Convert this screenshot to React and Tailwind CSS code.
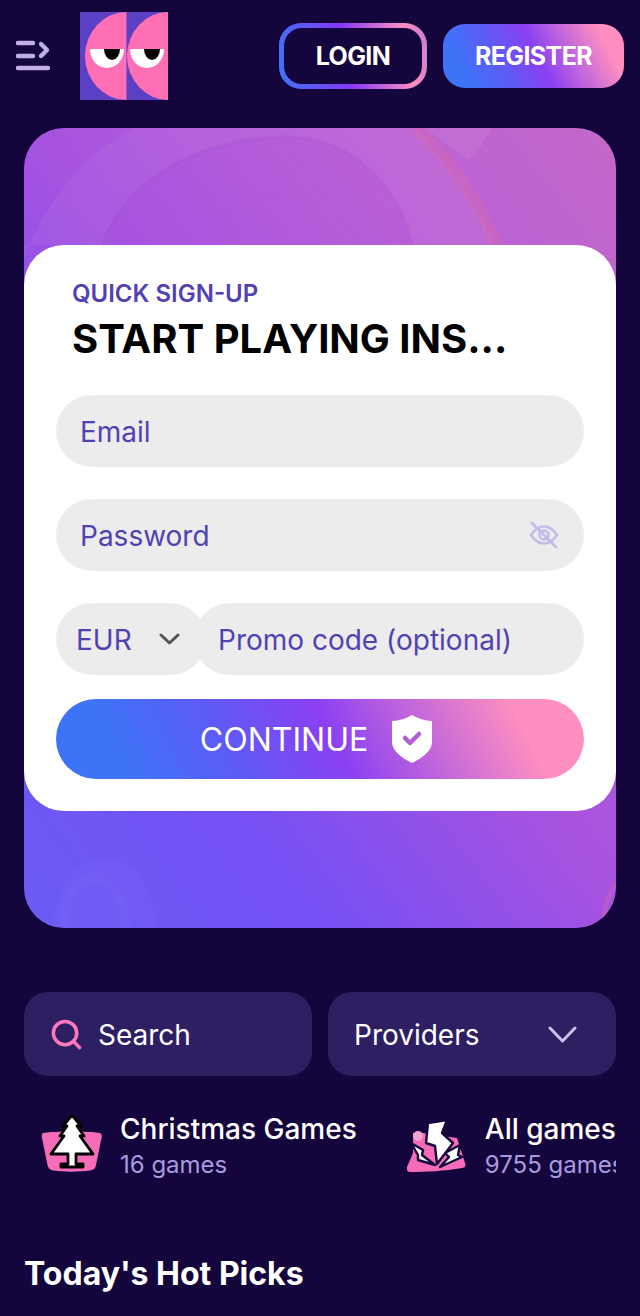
import React from 'react';
import { Search } from 'lucide-react';

const gradient = 'bg-[linear-gradient(63deg,#3d74f7_13%,#5c5cf7_32%,#8a40f2_52%,#c76ad8_70%,#ff8fc0_87%)]';

const MenuIcon = () => (
  <svg width="36" height="32" viewBox="0 0 36 32" fill="none" stroke="#bfaee8" strokeWidth="4.4" strokeLinecap="round" strokeLinejoin="round">
    <path d="M2 3h15M2 16h15M2 28h30" />
    <path d="M25 5l6 6-6 6" transform="translate(0 -1)" />
  </svg>
);

const Logo = () => (
  <svg width="88" height="88" viewBox="0 0 88 88" className="shrink-0">
    <rect width="88" height="88" fill="#5b3fc4" />
    <path d="M46.5 0A41.5 44 0 0 0 46.5 88Z" fill="#ff6fb5" />
    <path d="M88 0A41 44 0 0 0 88 88Z" fill="#ff6fb5" />
    <path d="M10 37H44A17 19 0 0 1 10 37Z" fill="#fff" />
    <path d="M50 37H84A17 19 0 0 1 50 37Z" fill="#fff" />
    <path d="M24 37H40A8 11 0 0 1 24 37Z" fill="#000" />
    <path d="M64 37H80A8 11 0 0 1 64 37Z" fill="#000" />
  </svg>
);

const HeroArt = () => (
  <svg className="absolute inset-0 w-full h-full" viewBox="0 0 592 800" fill="none">
    <path fillRule="evenodd" d="M0 130C25 65 70 20 110 0H390C430 40 460 90 470 117H0ZM78 117C100 50 180 9 262 9C330 9 375 60 388 117Z" fill="#fff" fillOpacity="0.05" />
    <path d="M78 117C100 50 180 9 262 9C330 9 375 60 388 117" stroke="#a04fc0" strokeOpacity="0.18" strokeWidth="4" />
    <path d="M180 117C190 90 215 70 262 62" stroke="#a04fc0" strokeOpacity="0.08" strokeWidth="3" />
    <path d="M392 0C430 35 458 80 472 117" stroke="#e06aa8" strokeOpacity="0.35" strokeWidth="12" />
    <path d="M400 0H466C462 12 455 24 445 32Z" fill="#fff" fillOpacity="0.07" />
    <ellipse cx="80" cy="800" rx="52" ry="70" fill="#fff" fillOpacity="0.025" />
    <ellipse cx="70" cy="800" rx="32" ry="50" stroke="#fff" strokeOpacity="0.02" strokeWidth="10" />
    <path d="M592 755C582 770 578 785 582 800" stroke="#e06aa8" strokeOpacity="0.3" strokeWidth="5" />
  </svg>
);

const EyeOff = () => (
  <svg width="30" height="30" viewBox="0 0 30 30" fill="none" stroke="#c3bbe8" strokeWidth="2.6" strokeLinecap="round" strokeLinejoin="round">
    <path d="M2 15C6 9 10 6.5 15 6.5S24 9 28 15C24 21 20 23.5 15 23.5S6 21 2 15Z" />
    <circle cx="15" cy="15" r="4.5" />
    <path d="M3 3l24 24" />
  </svg>
);

const ShieldCheck = () => (
  <svg width="40" height="48" viewBox="0 0 40 48">
    <path d="M20 0C26 4 33 5.5 40 6V27C40 36 30 43 20 48C10 43 0 36 0 27V6C7 5.5 14 4 20 0Z" fill="#fff" />
    <path d="M13 23l5 5 9-9" fill="none" stroke="#b15ed8" strokeWidth="4.5" strokeLinecap="round" strokeLinejoin="round" />
  </svg>
);

const Chevron = ({ width, height, color, strokeWidth }) => (
  <svg width={width} height={height} viewBox={`0 0 ${width} ${height}`} fill="none" stroke={color} strokeWidth={strokeWidth} strokeLinecap="round" strokeLinejoin="round" className="shrink-0">
    <path d={`M2 2L${width / 2} ${height - 2}L${width - 2} 2`} />
  </svg>
);

const TreeIcon = () => (
  <svg width="64" height="64" viewBox="0 0 64 64">
    <path d="M3 20C16 18 48 18 60 20C62 21 62 23 61.5 25L56 52C55.5 56 53 57 50 57.5C38 59 24 59 13 57.5C10 57 8 55 7.5 52L2 25C1.5 22 2 21 3 20Z" fill="#f76cb8" />
    <path d="M32 2L41 13H37L44 23H40L53 41H36V51H43V54H21V51H28V41H11L24 23H20L27 13H23Z" fill="#fff" stroke="#000" strokeWidth="2.8" strokeLinejoin="round" />
  </svg>
);

const BoltIcon = () => (
  <svg width="60" height="56" viewBox="0 0 60 56">
    <path d="M6 16H16L50 21L58 46C59 49 58 51 55 51C38 54 18 55 3 55C0 55 -1 52 0 50L6 36Z" fill="#f76cb8" />
    <circle cx="11" cy="19" r="5" fill="#f7a3d2" />
    <path d="M4 26L16 33L15 38L28 48L11 43L11 38Z" fill="#fff" stroke="#14053c" strokeWidth="2.4" strokeLinejoin="round" />
    <path d="M53 28L51 38L55 40L33 50L42 40L38 36Z" fill="#fff" stroke="#14053c" strokeWidth="2.4" strokeLinejoin="round" />
    <path d="M21 6L40 3L35 16L46 26L30 47L28 29L19 26Z" fill="#fff" stroke="#14053c" strokeWidth="2.4" strokeLinejoin="round" />
  </svg>
);

const Category = ({ icon, title, count, className }) => (
  <div className={`flex items-center shrink-0 ${className}`}>
    <div className="w-[64px] h-[64px] flex items-center justify-center shrink-0">{icon}</div>
    <div className="ml-4">
      <div className="text-[28px] leading-[38px] font-medium text-white whitespace-nowrap">{title}</div>
      <div className="mt-[1px] text-[24px] leading-[32px] text-[#a99be0] whitespace-nowrap">{count}</div>
    </div>
  </div>
);

const App = () => {
  return (
    <div className="w-[640px] h-[1316px] overflow-hidden bg-[#14053c] font-['Inter',sans-serif]">
      <header className="flex items-start pt-3 pl-4 pr-4 h-[128px]">
        <div className="mt-[28px] mr-[28px]"><MenuIcon /></div>
        <Logo />
        <div className="ml-auto mt-[11px] flex items-center gap-4">
          <div className="w-[148px] h-[66px] rounded-[22px] p-[5px] bg-[linear-gradient(80deg,#3d74f7,#8338f5_45%,#ff8fc0_85%,#c878d0)]">
            <div className="w-full h-full rounded-[18px] bg-[#14053c] flex items-center justify-center pt-[2px] text-[25px] font-bold text-white tracking-tight">LOGIN</div>
          </div>
          <div className={`w-[181px] h-[64px] rounded-[22px] ${gradient} flex items-center justify-center pt-[2px] text-[25px] font-bold text-white tracking-tight`}>REGISTER</div>
        </div>
      </header>

      <section className="relative mx-6 h-[800px] rounded-[40px] overflow-hidden bg-[linear-gradient(53deg,#6a5cf5_0%,#7550f5_25%,#a552e0_50%,#b85fd8_75%,#c468c8_100%)] flex items-center">
        <HeroArt />
        <div className="relative w-full h-[566px] bg-white rounded-[40px] px-8 pt-[33px]">
          <div className="px-4">
            <div className="text-[24px] leading-[32px] font-semibold text-[#5142b3]">QUICK SIGN-UP</div>
            <div className="text-[40px] leading-[48px] font-bold text-black mt-[5px] whitespace-nowrap">START PLAYING INS...</div>
          </div>
          <div className="mt-8 flex flex-col gap-8">
            <div className="h-[72px] rounded-[36px] bg-[#ececec] flex items-center px-6 pt-[2px] text-[28px] text-[#5142b3]">Email</div>
            <div className="h-[72px] rounded-[36px] bg-[#ececec] flex items-center justify-between pl-6 pr-[25px] text-[28px] text-[#5142b3]">
              <span className="pt-[2px]">Password</span>
              <EyeOff />
            </div>
            <div className="h-[72px] flex text-[28px] text-[#5142b3]">
              <div className="w-[150px] shrink-0 rounded-[36px] bg-[#ececec] flex items-center pl-5">
                <span className="pt-[2px]">EUR</span>
                <span className="ml-[27px]"><Chevron width={21} height={12} color="#555" strokeWidth={3} /></span>
              </div>
              <div className="flex-1 -ml-[12px] rounded-[36px] bg-[#ececec] flex items-center pl-6 pt-[2px] whitespace-nowrap">Promo code (optional)</div>
            </div>
          </div>
          <div className={`mt-6 h-20 rounded-[40px] ${gradient} flex items-center justify-center gap-6 pr-2 text-[32px] text-white`}>
            <span className="pt-[2px]">CONTINUE</span>
            <ShieldCheck />
          </div>
        </div>
      </section>

      <div className="mx-6 mt-16 flex gap-4">
        <div className="w-[288px] h-[84px] rounded-[24px] bg-[#2e1f63] flex items-center pl-[25px] text-[28px] text-white">
          <Search size={35} className="text-[#ff78bd] mr-[14px]" strokeWidth={2.4} />
          <span className="pt-[2px]">Search</span>
        </div>
        <div className="w-[288px] h-[84px] rounded-[24px] bg-[#2e1f63] flex items-center justify-between pl-[26px] pr-[39px] text-[28px] text-white">
          <span className="pt-[2px]">Providers</span>
          <Chevron width={29} height={17} color="#c9bfe9" strokeWidth={3} />
        </div>
      </div>

      <div className="ml-6 mt-[29px] flex overflow-hidden h-[80px] w-[592px] pl-4">
        <Category icon={<TreeIcon />} title="Christmas Games" count="16 games" className="mr-[48px]" />
        <Category icon={<BoltIcon />} title="All games" count="9755 games" />
      </div>

      <h2 className="mx-6 mt-[69px] text-[32px] leading-[40px] font-bold text-white">Today's Hot Picks</h2>
    </div>
  );
};

export default App;
